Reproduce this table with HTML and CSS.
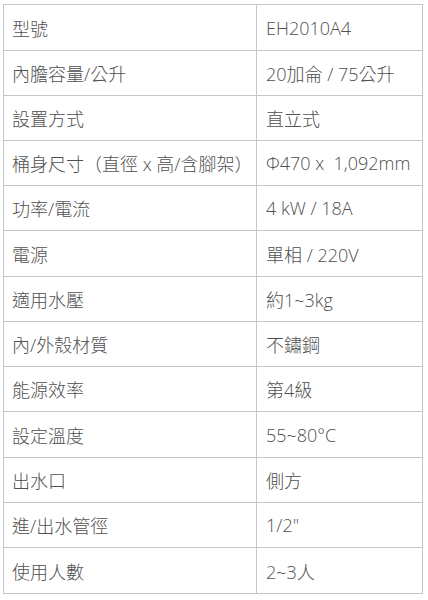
FILE: index.html
```html
<!DOCTYPE html>
<html lang="zh-Hant">
<head>
<meta charset="utf-8">
<link rel="stylesheet" href="styles.css">
</head>
<body>
<table class="spec">
  <tbody>
    <tr class="tall"><td class="k">型號</td><td class="v">EH2010A4</td></tr>
    <tr><td class="k">內膽容量/公升</td><td class="v">20加侖 / 75公升</td></tr>
    <tr><td class="k">設置方式</td><td class="v">直立式</td></tr>
    <tr><td class="k">桶身尺寸（直徑 x 高/含腳架）</td><td class="v">Φ470 x &nbsp;1,092mm</td></tr>
    <tr><td class="k">功率/電流</td><td class="v">4 kW / 18A</td></tr>
    <tr class="tall"><td class="k">電源</td><td class="v">單相 / 220V</td></tr>
    <tr><td class="k">適用水壓</td><td class="v">約1~3kg</td></tr>
    <tr><td class="k">內/外殼材質</td><td class="v">不鏽鋼</td></tr>
    <tr><td class="k">能源效率</td><td class="v">第4級</td></tr>
    <tr class="tall"><td class="k">設定溫度</td><td class="v">55~80°C</td></tr>
    <tr><td class="k">出水口</td><td class="v">側方</td></tr>
    <tr><td class="k">進/出水管徑</td><td class="v">1/2"</td></tr>
    <tr class="tall"><td class="k">使用人數</td><td class="v">2~3人</td></tr>
  </tbody>
</table>
</body>
</html>
```

FILE: styles.css
```css
html, body {
  margin: 0;
  padding: 0;
  background: #ffffff;
}
body {
  padding: 4px 0 0 3px;
}
.spec {
  border-collapse: collapse;
  width: 420px;
  table-layout: fixed;
  font-family: "Open Sans", "Noto Sans CJK TC", sans-serif;
  font-weight: 300;
  font-size: 18px;
  color: #505050;
}
.spec td {
  border: 1px solid #c6c6c6;
  padding: 0 0 0 8px;
  vertical-align: middle;
  white-space: nowrap;
  overflow: hidden;
  box-sizing: border-box;
  height: 45px;
}
.spec tr.tall td {
  height: 46px;
}
.spec td.k {
  width: 253px;
}
.spec td.v {
  padding-left: 9px;
}
```
